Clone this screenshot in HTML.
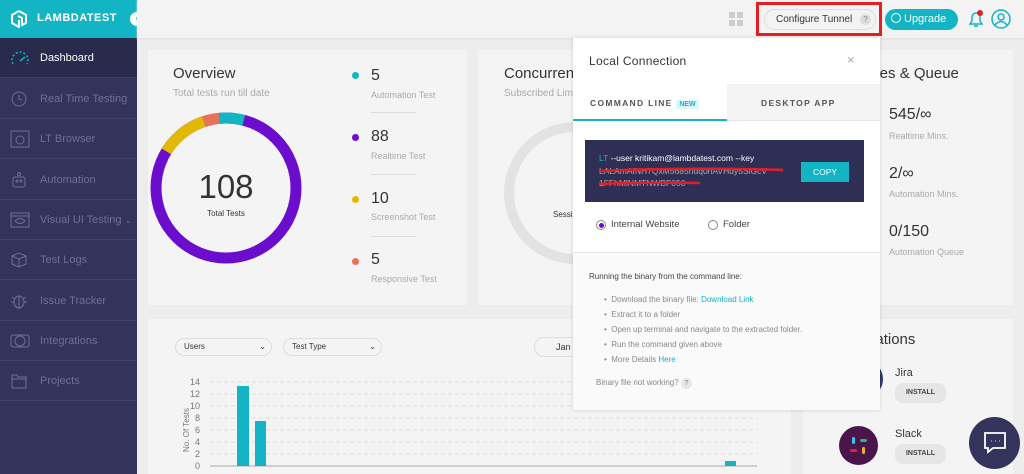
<!DOCTYPE html>
<html><head><meta charset="utf-8"><style>
*{box-sizing:border-box;margin:0;padding:0}
html,body{width:1024px;height:474px;overflow:hidden}
body{background:#ededed;font-family:"Liberation Sans",sans-serif;position:relative;color:#333}
.abs{position:absolute}
.sb{left:0;top:0;width:137px;height:474px;background:#33335c}
.logo{left:0;top:0;width:137px;height:38px;background:#13b5c4;color:#fff;font-weight:bold;font-size:11px;letter-spacing:.5px}
.nav{position:absolute;left:0;width:137px;height:40px;border-bottom:1px solid #3f3f6a;color:#6f7095;font-size:11px;line-height:40px;padding-left:40px}
.nav svg{position:absolute;left:10px;top:11px}
.hdr{left:137px;top:0;width:887px;height:38px;background:#f3f3f3;box-shadow:0 1px 2px #ddd}
.card{background:#f4f4f4;position:absolute}
.lbl{font-size:9px;color:#aaa}
.big{font-size:16px;color:#333}
</style></head><body>
<div class="abs sb"></div>
<div class="abs logo">
<svg class="abs" style="left:10px;top:10px" width="18" height="18" viewBox="0 0 18 18" fill="none" stroke="#fff" stroke-width="2"><path d="M9 1 L16 5 V13 L12 15 V8 L8 6 M9 1 L2 5 V13 L9 17 V10"/></svg>
<span class="abs" style="left:37px;top:12px">LAMBDATEST</span></div>
<div class="abs" style="left:130px;top:12px;width:14px;height:14px;border-radius:50%;background:#fff;color:#13b5c4;font-size:10px;text-align:center;line-height:13px;font-weight:bold">‹</div>
<div class="nav" style="top:38px;background:#2a2a4d;color:#fff"><svg width="20" height="18" viewBox="0 0 20 18" fill="none" stroke="#13b5c4" stroke-width="1.5"><path d="M3 15 A8 8 0 1 1 17 15" stroke-dasharray="2 2"/><path d="M10 12 L15 8"/></svg>Dashboard</div>
<div class="nav" style="top:79px"><svg width="18" height="18" viewBox="0 0 18 18" fill="none" stroke="#6f7095"><circle cx="9" cy="9" r="7"/><path d="M9 5V9L12 10"/></svg>Real Time Testing</div>
<div class="nav" style="top:119px"><svg width="20" height="18" viewBox="0 0 20 18" fill="none" stroke="#6f7095"><rect x="1" y="1" width="18" height="16"/><circle cx="10" cy="10" r="4"/></svg>LT Browser</div>
<div class="nav" style="top:160px"><svg width="18" height="18" viewBox="0 0 18 18" fill="none" stroke="#6f7095"><rect x="3" y="6" width="12" height="10" rx="2"/><circle cx="9" cy="3" r="1.5"/><circle cx="7" cy="10" r="1"/><circle cx="11" cy="10" r="1"/></svg>Automation</div>
<div class="nav" style="top:200px"><svg width="20" height="18" viewBox="0 0 20 18" fill="none" stroke="#6f7095"><rect x="1" y="2" width="18" height="14"/><path d="M1 5H19M5 10Q10 5 15 10Q10 15 5 10"/></svg>Visual UI Testing <span style="font-size:9px">⌄</span></div>
<div class="nav" style="top:240px"><svg width="18" height="18" viewBox="0 0 18 18" fill="none" stroke="#6f7095"><path d="M2 5L9 2L16 5V13L9 16L2 13ZM2 5L9 8L16 5M9 8V16"/></svg>Test Logs</div>
<div class="nav" style="top:281px"><svg width="18" height="18" viewBox="0 0 18 18" fill="none" stroke="#6f7095"><ellipse cx="9" cy="10" rx="5" ry="6"/><path d="M1 10H4M14 10H17M2 5L5 7M16 5L13 7M9 4V16"/></svg>Issue Tracker</div>
<div class="nav" style="top:321px"><svg width="20" height="18" viewBox="0 0 20 18" fill="none" stroke="#6f7095"><rect x="1" y="3" width="18" height="12" rx="2"/><circle cx="10" cy="9" r="5"/></svg>Integrations</div>
<div class="nav" style="top:361px"><svg width="18" height="18" viewBox="0 0 18 18" fill="none" stroke="#6f7095"><path d="M2 3H7L8 5H16V16H2ZM2 7H16"/></svg>Projects</div>

<div class="abs hdr"></div>
<svg class="abs" style="left:729px;top:12px" width="14" height="14"><rect x="0" y="0" width="6" height="6" fill="#ccc"/><rect x="8" y="0" width="6" height="6" fill="#ccc"/><rect x="0" y="8" width="6" height="6" fill="#ccc"/><rect x="8" y="8" width="6" height="6" fill="#ccc"/></svg>
<div class="abs" style="left:756px;top:2px;width:126px;height:34px;border:3px solid #e31e25"></div>
<div class="abs" style="left:764px;top:9px;width:112px;height:21px;border:1px solid #ddd;border-radius:11px;background:#f3f3f3;font-size:10px;line-height:19px;padding-left:11px;color:#333">Configure Tunnel <span style="display:inline-block;width:11px;height:11px;border-radius:50%;background:#ddd;color:#888;font-size:8px;text-align:center;line-height:11px;margin-left:5px">?</span></div>
<div class="abs" style="left:885px;top:9px;width:73px;height:21px;border-radius:11px;background:#13b5c4;color:#fff;font-size:11px;line-height:21px;padding-left:6px"><span style="display:inline-block;width:10px;height:10px;border:1.5px solid #fff;border-radius:50%;vertical-align:-1px;margin-right:3px"></span>Upgrade</div>
<svg class="abs" style="left:966px;top:9px" width="20" height="20" viewBox="0 0 20 20" fill="none" stroke="#13b5c4" stroke-width="1.5"><path d="M4 15H16L14 12V8A4 4 0 0 0 6 8V12Z M8 17H12"/><circle cx="14" cy="4" r="3" fill="#e31e25" stroke="none"/></svg>
<svg class="abs" style="left:991px;top:9px" width="20" height="20" viewBox="0 0 20 20" fill="none" stroke="#13b5c4" stroke-width="1.5"><circle cx="10" cy="10" r="9"/><circle cx="10" cy="8" r="3"/><path d="M4 16Q10 9 16 16"/></svg>

<!-- overview -->
<div class="card" style="left:148px;top:50px;width:319px;height:255px"></div>
<div class="abs" style="left:173px;top:65px;font-size:15px;color:#333">Overview</div>
<div class="abs lbl" style="left:173px;top:88px;font-size:10px">Total tests run till date</div>
<svg class="abs" style="left:150px;top:112px" width="152" height="152" viewBox="0 0 152 152">
<g transform="rotate(-90 76 76)" fill="none" stroke-width="11">
<circle cx="76" cy="76" r="70" stroke="#6a0dcc"/>
<circle cx="76" cy="76" r="70" stroke="#13b5c4" pathLength="440" stroke-dasharray="24 416" stroke-dashoffset="6"/>
<circle cx="76" cy="76" r="70" stroke="#e8735a" pathLength="440" stroke-dasharray="16 424" stroke-dashoffset="22"/>
<circle cx="76" cy="76" r="70" stroke="#e2b900" pathLength="440" stroke-dasharray="49 391" stroke-dashoffset="71"/>
</g></svg>
<div class="abs" style="left:190px;top:168px;width:72px;text-align:center;font-size:33px;color:#333;font-weight:300">108</div>
<div class="abs" style="left:190px;top:209px;width:72px;text-align:center;font-size:8px;color:#333">Total Tests</div>
<div class="abs" style="left:352px;top:72px;width:7px;height:7px;border-radius:50%;background:#13b5c4"></div>
<div class="abs big" style="left:371px;top:67px">5</div><div class="abs lbl" style="left:371px;top:90px">Automation Test</div>
<div class="abs" style="left:371px;top:112px;width:45px;border-top:1px solid #ddd"></div>
<div class="abs" style="left:352px;top:134px;width:7px;height:7px;border-radius:50%;background:#6a0dcc"></div>
<div class="abs big" style="left:371px;top:128px">88</div><div class="abs lbl" style="left:371px;top:151px">Realtime Test</div>
<div class="abs" style="left:371px;top:174px;width:45px;border-top:1px solid #ddd"></div>
<div class="abs" style="left:352px;top:196px;width:7px;height:7px;border-radius:50%;background:#e2b900"></div>
<div class="abs big" style="left:371px;top:190px">10</div><div class="abs lbl" style="left:371px;top:212px">Screenshot Test</div>
<div class="abs" style="left:371px;top:236px;width:45px;border-top:1px solid #ddd"></div>
<div class="abs" style="left:352px;top:258px;width:7px;height:7px;border-radius:50%;background:#e8735a"></div>
<div class="abs big" style="left:371px;top:251px">5</div><div class="abs lbl" style="left:371px;top:274px">Responsive Test</div>

<!-- concurrency -->
<div class="card" style="left:478px;top:50px;width:322px;height:255px"></div>
<div class="abs" style="left:504px;top:65px;font-size:15px">Concurrency</div>
<div class="abs lbl" style="left:504px;top:88px;font-size:10px">Subscribed Limit</div>
<svg class="abs" style="left:500px;top:118px" width="150" height="150"><circle cx="75" cy="75" r="66" fill="none" stroke="#e3e3e3" stroke-width="10"/></svg>
<div class="abs" style="left:553px;top:210px;font-size:8px">Sessions</div>

<!-- right card -->
<div class="card" style="left:810px;top:50px;width:203px;height:255px"></div>
<div class="abs" style="left:843px;top:65px;font-size:15px">Minutes &amp; Queue</div>
<div class="abs big" style="left:889px;top:106px">545/∞</div><div class="abs lbl" style="left:889px;top:131px">Realtime Mins.</div>
<div class="abs big" style="left:889px;top:165px">2/∞</div><div class="abs lbl" style="left:889px;top:189px">Automation Mins.</div>
<div class="abs big" style="left:889px;top:223px">0/150</div><div class="abs lbl" style="left:889px;top:247px">Automation Queue</div>

<!-- bottom left -->
<div class="card" style="left:148px;top:319px;width:643px;height:160px"></div>
<div class="abs" style="left:175px;top:338px;width:97px;height:18px;border:1px solid #ddd;border-radius:9px;font-size:8px;line-height:16px;padding-left:8px">Users<span style="position:absolute;right:5px">⌄</span></div>
<div class="abs" style="left:283px;top:338px;width:99px;height:18px;border:1px solid #ddd;border-radius:9px;font-size:8px;line-height:16px;padding-left:8px">Test Type<span style="position:absolute;right:5px">⌄</span></div>
<div class="abs" style="left:534px;top:337px;width:60px;height:20px;border:1px solid #ddd;border-radius:10px;font-size:9px;line-height:18px;padding-left:21px">Jan</div>
<svg class="abs" style="left:175px;top:374px" width="600" height="100" font-family="Liberation Sans" font-size="9" fill="#777">
<g stroke="#ddd" stroke-dasharray="4 3"><line x1="35" y1="8" x2="582" y2="8"/><line x1="35" y1="20" x2="582" y2="20"/><line x1="35" y1="32" x2="582" y2="32"/><line x1="35" y1="44" x2="582" y2="44"/><line x1="35" y1="56" x2="582" y2="56"/><line x1="35" y1="68" x2="582" y2="68"/><line x1="35" y1="80" x2="582" y2="80"/></g>
<line x1="35" y1="92" x2="582" y2="92" stroke="#aaa"/>
<text x="25" y="11" text-anchor="end">14</text><text x="25" y="23" text-anchor="end">12</text><text x="25" y="35" text-anchor="end">10</text><text x="25" y="47" text-anchor="end">8</text><text x="25" y="59" text-anchor="end">6</text><text x="25" y="71" text-anchor="end">4</text><text x="25" y="83" text-anchor="end">2</text><text x="25" y="95" text-anchor="end">0</text>
<text transform="translate(14 56) rotate(-90)" text-anchor="middle" font-size="8">No. Of Tests</text>
<rect x="62" y="12" width="12" height="80" fill="#13b5c4"/><rect x="80" y="47" width="11" height="45" fill="#13b5c4"/><rect x="550" y="87" width="11" height="5" fill="#13b5c4"/>
</svg>

<!-- bottom right -->
<div class="card" style="left:803px;top:319px;width:210px;height:160px"></div>
<div class="abs" style="left:837px;top:331px;font-size:15px">Integrations</div>
<div class="abs" style="left:843px;top:359px;width:40px;height:40px;border-radius:50%;background:#2f3a6b"></div>
<div class="abs" style="left:895px;top:367px;font-size:11px">Jira</div>
<div class="abs" style="left:895px;top:383px;width:51px;height:20px;border-radius:8px;background:#e6e6e6;font-size:7px;font-weight:bold;text-align:center;line-height:20px;color:#444">INSTALL</div>
<div class="abs" style="left:839px;top:426px;width:39px;height:39px;border-radius:50%;background:#4a154b"></div>
<svg class="abs" style="left:850px;top:437px" width="17" height="17"><rect x="2" y="0" width="3" height="7" rx="1.5" fill="#36c5f0"/><rect x="10" y="2" width="7" height="3" rx="1.5" fill="#2eb67d"/><rect x="12" y="10" width="3" height="7" rx="1.5" fill="#ecb22e"/><rect x="0" y="12" width="7" height="3" rx="1.5" fill="#e01e5a"/></svg>
<div class="abs" style="left:895px;top:428px;font-size:11px">Slack</div>
<div class="abs" style="left:895px;top:444px;width:51px;height:20px;border-radius:8px;background:#e6e6e6;font-size:7px;font-weight:bold;text-align:center;line-height:20px;color:#444">INSTALL</div>
<div class="abs" style="left:969px;top:417px;width:51px;height:52px;border-radius:50%;background:#33335c"></div>
<svg class="abs" style="left:982px;top:430px" width="26" height="26" fill="none" stroke="#fff" stroke-width="1.8"><path d="M3 3H23V18H11L6 22V18H3Z"/><path d="M9 11h1M13 11h1M17 11h1" stroke="#13b5c4" stroke-width="2"/></svg>

<!-- popup -->
<div class="abs" style="left:573px;top:38px;width:307px;height:372px;background:#fff;box-shadow:0 0 4px rgba(0,0,0,.15)"></div>
<div class="abs" style="left:589px;top:54px;font-size:12px;color:#333;letter-spacing:.3px">Local Connection</div>
<div class="abs" style="left:847px;top:52px;font-size:13px;color:#aaa">×</div>
<div class="abs" style="left:727px;top:84px;width:153px;height:37px;background:#f4f4f4;border-bottom:1px solid #e6e6e6"></div>
<div class="abs" style="left:573px;top:119px;width:154px;height:2px;background:#13b5c4"></div>
<div class="abs" style="left:590px;top:98px;font-size:8.5px;letter-spacing:1.3px;color:#555;font-weight:bold">COMMAND LINE <span style="background:#e0f6f8;color:#13b5c4;font-size:7px;letter-spacing:0;padding:1px 3px">NEW</span></div>
<div class="abs" style="left:761px;top:98px;font-size:8.5px;letter-spacing:1.3px;color:#555;font-weight:bold">DESKTOP APP</div>
<div class="abs" style="left:585px;top:140px;width:279px;height:62px;background:#2f2f56"></div>
<div class="abs" style="left:599px;top:153px;font-size:8.5px;color:#fff"><span style="color:#13b5c4">LT</span> --user kritikam@lambdatest.com --key</div>
<div class="abs" style="left:599px;top:166px;font-size:8.5px;color:#aaa">LALAmAfNH7QxM5685hdq0hAVHdy5SiGcV</div>
<div class="abs" style="left:599px;top:178px;font-size:8.5px;color:#aaa">1FFhMlNMTNWBF050</div>
<svg class="abs" style="left:597px;top:165px" width="190" height="25"><path d="M2 6 Q90 2 186 5" stroke="#e31e25" stroke-width="2.5" fill="none"/><path d="M2 19 Q50 17 103 18" stroke="#e31e25" stroke-width="2.5" fill="none"/></svg>
<div class="abs" style="left:801px;top:162px;width:48px;height:20px;background:#13b5c4;color:#fff;font-size:8.5px;text-align:center;line-height:20px">COPY</div>
<div class="abs" style="left:596px;top:220px;width:10px;height:10px;border:1px solid #888;border-radius:50%"><div style="margin:1.5px;width:5px;height:5px;border-radius:50%;background:#6a0dcc"></div></div>
<div class="abs" style="left:611px;top:219px;font-size:9.5px;color:#444">Internal Website</div>
<div class="abs" style="left:708px;top:220px;width:10px;height:10px;border:1px solid #888;border-radius:50%"></div>
<div class="abs" style="left:723px;top:219px;font-size:9.5px;color:#444">Folder</div>
<div class="abs" style="left:573px;top:252px;width:307px;height:158px;background:#fafafa;border-top:1px solid #e6e6e6"></div>
<div class="abs" style="left:589px;top:272px;font-size:8px;color:#444">Running the binary from the command line:</div>
<div class="abs" style="left:604px;top:292px;font-size:8px;color:#888;line-height:15px">• &nbsp;Download the binary file: <span style="color:#13b5c4">Download Link</span><br>• &nbsp;Extract it to a folder<br>• &nbsp;Open up terminal and navigate to the extracted folder.<br>• &nbsp;Run the command given above<br>• &nbsp;More Details <span style="color:#13b5c4">Here</span></div>
<div class="abs" style="left:596px;top:378px;font-size:8px;color:#888">Binary file not working? <span style="display:inline-block;width:11px;height:11px;border-radius:50%;background:#e6e6e6;text-align:center;line-height:11px;font-size:7px">?</span></div>
</body></html>
